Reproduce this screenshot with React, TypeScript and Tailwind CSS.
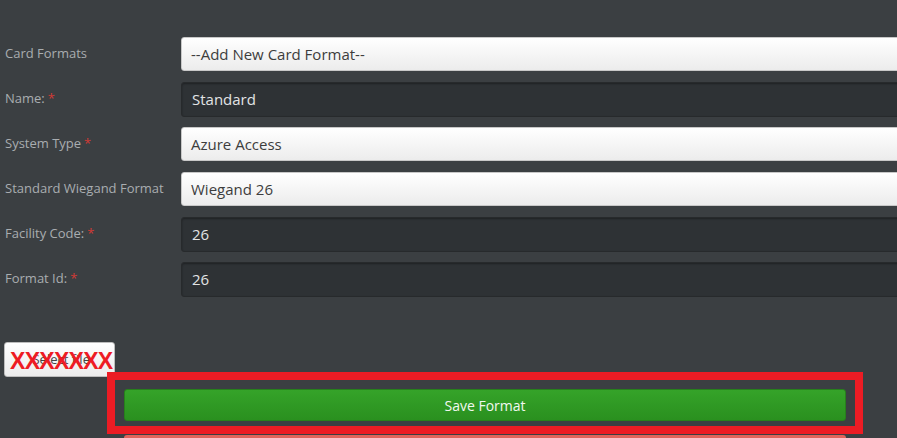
import React from "react";

const font = { fontFamily: '"Open Sans", "Noto Sans", sans-serif' };

function Label({ text, req }: { text: string; req?: boolean }) {
  return (
    <div className="w-[181px] shrink-0 pl-[5px] text-[13px] text-[#a9adb0] flex items-center">
      <span>{text}</span>
      {req && <span className="ml-[3px] text-[#d23a35]">*</span>}
    </div>
  );
}

function LightInput({ value }: { value: string }) {
  return (
    <div className="h-[34px] flex-1 rounded-[3px] border border-[#c8c8c8] bg-gradient-to-b from-[#ffffff] to-[#ececec] flex items-center pl-[9px] text-[15px] text-[#3d3d3d]">
      {value}
    </div>
  );
}

function DarkInput({ value }: { value: string }) {
  return (
    <div className="h-[35px] flex-1 rounded-[3px] border border-[#272a2c] bg-[#2e3235] flex items-center pl-[10px] text-[15px] text-[#e2e4e5] shadow-[inset_0_1px_2px_rgba(0,0,0,0.35)]">
      {value}
    </div>
  );
}

export default function App() {
  return (
    <div className="relative h-[438px] w-[897px] overflow-hidden bg-[#3b3f42]" style={font}>
      <div className="w-[940px] pt-[37px] flex flex-col gap-[11px]">
        <div className="flex h-[34px]">
          <Label text="Card Formats" />
          <LightInput value="--Add New Card Format--" />
        </div>
        <div className="flex h-[34px]">
          <Label text="Name:" req />
          <DarkInput value="Standard" />
        </div>
        <div className="flex h-[34px]">
          <Label text="System Type" req />
          <LightInput value="Azure Access" />
        </div>
        <div className="flex h-[34px]">
          <Label text="Standard Wiegand Format" />
          <LightInput value="Wiegand 26" />
        </div>
        <div className="flex h-[34px]">
          <Label text="Facility Code:" req />
          <DarkInput value="26" />
        </div>
        <div className="flex h-[34px]">
          <Label text="Format Id:" req />
          <DarkInput value="26" />
        </div>
      </div>

      <div className="mt-[46px] ml-[4px] relative w-[111px] h-[35px] rounded-[3px] border border-[#bdbdbd] bg-gradient-to-b from-[#ffffff] to-[#ececec] flex items-center justify-center text-[13px] text-[#444]">
        <span>.Select file</span>
        <span
          className="absolute left-[5px] top-[4px] text-[23px] leading-[28px] font-bold tracking-[-0.7px] text-[#ee1c24]"
          style={{ fontFamily: '"Liberation Sans", Arial, sans-serif' }}
        >
          XXXXXXX
        </span>
      </div>

      <div className="mt-[12px] ml-[124px] w-[722px] h-[32px] rounded-[3px] border border-[#27801c] bg-gradient-to-b from-[#35a329] to-[#2a901f] flex items-center justify-center text-[14px] text-[#f2f8f0]">
        Save Format
      </div>
      <div className="mt-[14px] ml-[124px] w-[722px] h-[32px] rounded-[3px] bg-[#e0645c]" />

      <div className="absolute left-[107px] top-[372px] w-[756px] h-[62px] border-[8px] border-[#ec1c24]" />
    </div>
  );
}
